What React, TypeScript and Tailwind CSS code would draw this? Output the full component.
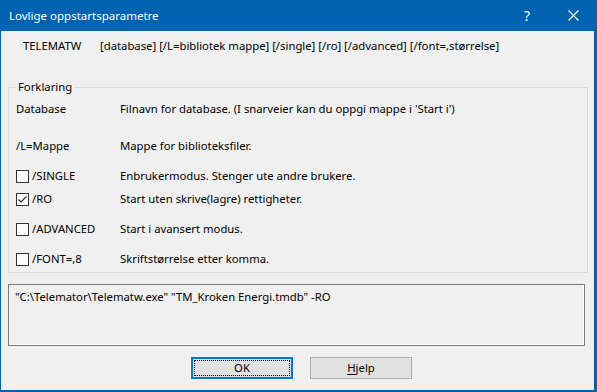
import React from "react";

type Row = {
  label: string;
  text: string;
  check?: boolean;
  checked?: boolean;
  mt: string;
};

const rows: Row[] = [
  { label: "Database", text: "Filnavn for database. (I snarveier kan du oppgi mappe i 'Start i')", mt: "mt-[13px]" },
  { label: "/L=Mappe", text: "Mappe for biblioteksfiler.", mt: "mt-[21px]" },
  { label: "/SINGLE", text: "Enbrukermodus. Stenger ute andre brukere.", check: true, mt: "mt-[14px]" },
  { label: "/RO", text: "Start uten skrive(lagre) rettigheter.", check: true, checked: true, mt: "mt-[7px]" },
  { label: "/ADVANCED", text: "Start i avansert modus.", check: true, mt: "mt-[14px]" },
  { label: "/FONT=,8", text: "Skriftstørrelse etter komma.", check: true, mt: "mt-[14px]" },
];

const CheckBox = ({ checked }: { checked?: boolean }) => (
  <span className="mr-[3px] flex h-[13px] w-[13px] shrink-0 items-center justify-center border border-[#333333] bg-white">
    {checked && (
      <svg width="11" height="11" viewBox="0 0 11 11">
        <path d="M1.5 5.5 L4 8 L9.5 2.5" fill="none" stroke="#333333" strokeWidth="1.2" />
      </svg>
    )}
  </span>
);

const OptionRow = ({ label, text, check, checked, mt }: Row) => (
  <div className={`flex h-[16px] items-center leading-[16px] ${mt}`}>
    <div className="flex w-[104px] items-center">
      {check && <CheckBox checked={checked} />}
      <span>{label}</span>
    </div>
    <span>{text}</span>
  </div>
);

export default function App() {
  return (
    <div
      className="flex h-[392px] w-[597px] flex-col border-b-2 border-l border-r-[3px] border-[#0063b1] bg-[#f0f0f0] text-[11.3px] text-black"
      style={{ fontFamily: '"Noto Sans", "Segoe UI", sans-serif' }}
    >
      {/* title bar */}
      <div className="flex h-[31px] shrink-0 items-center bg-[#0063b1] text-[11.5px] text-white">
        <span className="ml-[8px] flex-1 leading-[16px]">Lovlige oppstartsparametre</span>
        <span className="w-[50px] text-center text-[14px]">?</span>
        <span className="flex w-[42px] justify-center">
          <svg width="11" height="11" viewBox="0 0 11 11">
            <path d="M0.5 0.5 L10.5 10.5 M10.5 0.5 L0.5 10.5" stroke="white" strokeWidth="1.1" />
          </svg>
        </span>
      </div>

      {/* syntax */}
      <div className="mt-[7px] flex h-[16px] pl-[22px] leading-[16px]">
        <span className="w-[77px]">TELEMATW</span>
        <span>[database] [/L=bibliotek mappe] [/single] [/ro] [/advanced] [/font=,størrelse]</span>
      </div>

      {/* group box */}
      <div className="relative ml-[7px] mt-[33px] w-[580px] border border-[#dcdcdc] pb-[5px] pl-[7px]">
        <span className="absolute -top-[9px] left-[7px] bg-[#f0f0f0] px-[2px] leading-[16px]">
          Forklaring
        </span>
        {rows.map((r) => (
          <OptionRow key={r.label} {...r} />
        ))}
      </div>

      {/* command line */}
      <div className="ml-[7px] mt-[11px] h-[62px] w-[577px] border border-[#7a7a7a] bg-[#f0f0f0] px-[6px] pt-[4px] leading-[16px] shadow-[inset_-1px_-1px_0_#ffffff]">
        "C:\Telemator\Telematw.exe" "TM_Kroken Energi.tmdb" -RO
      </div>

      {/* buttons */}
      <div className="ml-[190px] mt-[11px] flex gap-[17px]">
        <button className="flex h-[22px] w-[102px] items-center justify-center border-2 border-[#0078d7] bg-[#e1e1e1] p-[1px]">
          <span className="flex h-full w-full items-center justify-center border border-dotted border-black leading-[16px]">
            OK
          </span>
        </button>
        <button className="flex h-[22px] w-[102px] items-center justify-center border border-[#adadad] bg-[#e1e1e1] leading-[16px]">
          <span>
            <span className="underline underline-offset-2">H</span>jelp
          </span>
        </button>
      </div>
    </div>
  );
}
